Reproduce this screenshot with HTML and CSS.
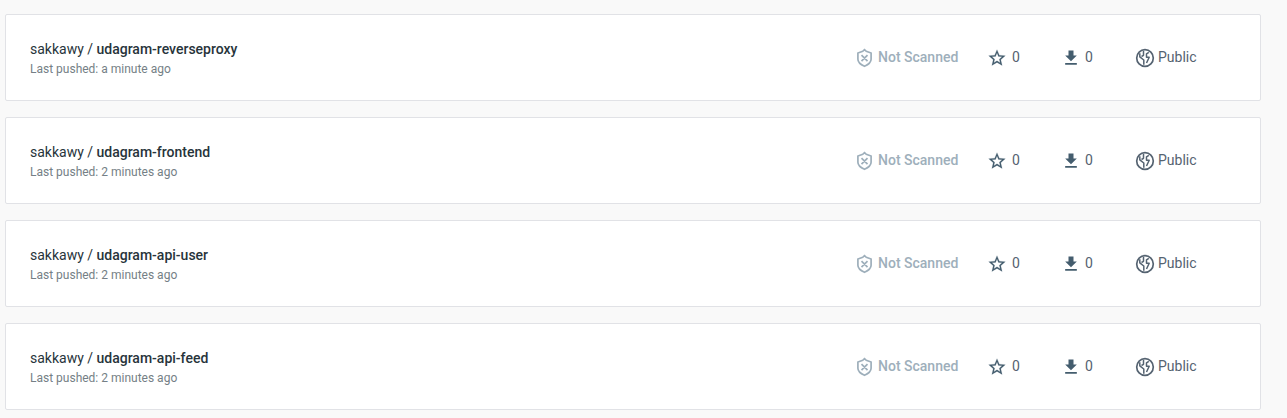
FILE: index.html
```html
<!DOCTYPE html>
<html lang="en">
<head>
<meta charset="utf-8">
<title>Repositories</title>
<link rel="stylesheet" href="styles.css">
</head>
<body>
<svg class="sprite" aria-hidden="true">
  <symbol id="shield" viewBox="0 0 20 20"><path d="M10.500 1.700l1.800 1.600 4.800 1.700v6.200c0 2.800-2.700 5.300-6.600 7-3.900-1.700-6.600-4.200-6.600-7V5l4.800-1.700zM7.500 7.200l6 6M13.500 7.200l-6 6" fill="none" stroke="currentColor" stroke-width="1.700"/></symbol>
  <symbol id="star" viewBox="0 0 24 24"><path fill="currentColor" stroke="currentColor" stroke-width=".2" d="M22 9.240l-7.190-.62L12 2 9.190 8.630 2 9.240l5.460 4.730L5.820 21 12 17.270 18.180 21l-1.630-7.030L22 9.240zM12 15.400l-3.760 2.270 1-4.280-3.320-2.880 4.380-.38L12 6.100l1.710 4.040 4.380.38-3.320 2.880 1 4.280L12 15.400z"/></symbol>
  <symbol id="download" viewBox="0 0 24 24"><path fill="currentColor" d="M19 9h-4V3H9v6H5l7 7 7-7zM5 18v2h14v-2H5z"/></symbol>
  <symbol id="globe" viewBox="0 0 20 20"><g fill="none" stroke="currentColor" stroke-width="1.500" stroke-linejoin="round"><circle cx="10" cy="10" r="8.300" stroke-width="1.700"/><path d="M4.800 5.300v3.500l4 3.200v4.700M8.500 3v4.300l-2 1.200M13.800 4.300l-2.300 1.500v3.400h2.700L11.500 15"/></g></symbol>
</svg>
<main class="repos">
  <article class="card">
    <div class="info"><div class="name">sakkawy / <strong>udagram-reverseproxy</strong></div><div class="pushed">Last pushed: a minute ago</div></div>
    <div class="stat scan"><svg class="icon"><use href="#shield"/></svg>Not Scanned</div>
    <div class="stat stars"><svg class="icon"><use href="#star"/></svg>0</div>
    <div class="stat pulls"><svg class="icon"><use href="#download"/></svg>0</div>
    <div class="stat access"><svg class="icon"><use href="#globe"/></svg>Public</div>
  </article>
  <article class="card">
    <div class="info"><div class="name">sakkawy / <strong>udagram-frontend</strong></div><div class="pushed">Last pushed: 2 minutes ago</div></div>
    <div class="stat scan"><svg class="icon"><use href="#shield"/></svg>Not Scanned</div>
    <div class="stat stars"><svg class="icon"><use href="#star"/></svg>0</div>
    <div class="stat pulls"><svg class="icon"><use href="#download"/></svg>0</div>
    <div class="stat access"><svg class="icon"><use href="#globe"/></svg>Public</div>
  </article>
  <article class="card">
    <div class="info"><div class="name">sakkawy / <strong>udagram-api-user</strong></div><div class="pushed">Last pushed: 2 minutes ago</div></div>
    <div class="stat scan"><svg class="icon"><use href="#shield"/></svg>Not Scanned</div>
    <div class="stat stars"><svg class="icon"><use href="#star"/></svg>0</div>
    <div class="stat pulls"><svg class="icon"><use href="#download"/></svg>0</div>
    <div class="stat access"><svg class="icon"><use href="#globe"/></svg>Public</div>
  </article>
  <article class="card">
    <div class="info"><div class="name">sakkawy / <strong>udagram-api-feed</strong></div><div class="pushed">Last pushed: 2 minutes ago</div></div>
    <div class="stat scan"><svg class="icon"><use href="#shield"/></svg>Not Scanned</div>
    <div class="stat stars"><svg class="icon"><use href="#star"/></svg>0</div>
    <div class="stat pulls"><svg class="icon"><use href="#download"/></svg>0</div>
    <div class="stat access"><svg class="icon"><use href="#globe"/></svg>Public</div>
  </article>
</main>
</body>
</html>
```
FILE: styles.css
```css
* { box-sizing: border-box; }
body {
  margin: 0;
  background: #f9f9f9;
  font-family: Roboto, "Liberation Sans", sans-serif;
  font-size: 14px;
}
.sprite { display: none; }
.repos {
  display: flex;
  flex-direction: column;
  gap: 16px;
  width: 1256px;
  margin-left: 5px;
  padding-top: 14px;
}
.card {
  display: grid;
  grid-template-columns: 1fr 133px 74px 74px 101px;
  height: 87px;
  padding: 24px;
  background: #fff;
  border: 1px solid #e1e2e6;
  border-radius: 2px;
}
.name {
  color: #27343b;
  line-height: 20px;
}
.name strong { font-weight: 500; }
.pushed {
  color: #757f86;
  font-size: 12px;
  line-height: 20px;
}
.stat {
  display: flex;
  align-items: center;
  height: 36px;
  color: #556371;
}
.icon {
  flex: none;
  width: 20px;
  height: 20px;
  margin: 2px 4px 0 0;
  color: #445d6e;
}
.scan {
  color: #9eafbb;
  font-weight: 500;
}
.scan .icon { color: inherit; }
.stars .icon { margin-right: 5px; }
.access .icon {
  margin-right: 3px;
  color: #556371;
}
```
